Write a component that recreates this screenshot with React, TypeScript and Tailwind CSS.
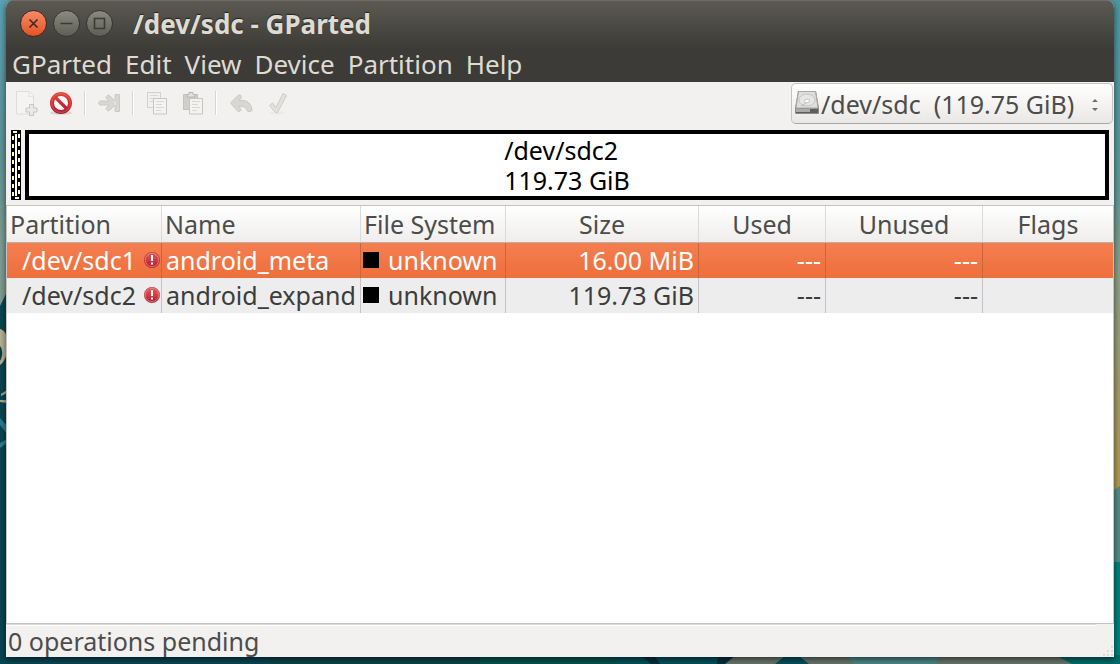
import { useState } from 'react';
import type { ReactNode } from 'react';

interface Partition {
  path: string;
  name: string;
  fileSystem: string;
  size: string;
  used: string;
  unused: string;
  flags: string;
}

const partitions: Partition[] = [
  { path: '/dev/sdc1', name: 'android_meta', fileSystem: 'unknown', size: '16.00 MiB', used: '---', unused: '---', flags: '' },
  { path: '/dev/sdc2', name: 'android_expand', fileSystem: 'unknown', size: '119.73 GiB', used: '---', unused: '---', flags: '' },
];

const menus = ['GParted', 'Edit', 'View', 'Device', 'Partition', 'Help'];

const columns = [
  { label: 'Partition', width: 'w-[155px]', align: 'text-left' },
  { label: 'Name', width: 'w-[199px]', align: 'text-left' },
  { label: 'File System', width: 'w-[145px]', align: 'text-left' },
  { label: 'Size', width: 'w-[193px]', align: 'text-center' },
  { label: 'Used', width: 'w-[127px]', align: 'text-center' },
  { label: 'Unused', width: 'w-[157px]', align: 'text-center' },
  { label: 'Flags', width: '', align: 'text-center' },
];

// Desktop wallpaper, only visible around the window edges
function Wallpaper() {
  return (
    <svg className="absolute inset-0 h-full w-full" viewBox="0 0 1120 664" preserveAspectRatio="none" aria-hidden="true">
      <defs>
        <linearGradient id="wallLeft" x1="0" y1="0" x2="0" y2="1">
          <stop offset="0" stopColor="#5aa0b4" />
          <stop offset="0.5" stopColor="#5f9296" />
          <stop offset="0.8" stopColor="#7d9c92" />
          <stop offset="1" stopColor="#829a90" />
        </linearGradient>
        <linearGradient id="wallRight" x1="0" y1="0" x2="0" y2="1">
          <stop offset="0" stopColor="#4c98a4" />
          <stop offset="0.38" stopColor="#5f9a98" />
          <stop offset="0.55" stopColor="#8d9f88" />
          <stop offset="0.8" stopColor="#a39b68" />
          <stop offset="1" stopColor="#b29a4e" />
        </linearGradient>
      </defs>
      <rect width="1120" height="664" fill="#0a4552" />
      <rect width="20" height="310" fill="url(#wallLeft)" />
      <path d="M0 306l6-12v20H0z" fill="#0b4453" />
      <path d="M0 329c4 1 6 4 7 9v16c-2 5-4 9-7 11z" fill="#b3b293" />
      <path d="M0 346c3 4 3 10 0 15z" fill="#0a3c49" />
      <path d="M1 394l6-4v3l-6 3zM0 400h7v3l-7-1z" fill="#a9ab8f" />
      <path d="M0 418l7 8v8l-7-9zM0 443l7-4v4l-7 5z" fill="#2b7d8c" />
      <rect x="1100" width="20" height="500" fill="url(#wallRight)" />
      <path d="M1100 500l20-14v80h-20z" fill="#558a86" />
      <rect x="1100" y="562" width="20" height="102" fill="#00807c" />
      <path d="M270 655h380v9H270z" fill="#0b4348" />
      <path d="M480 655h140v9H480z" fill="#04504d" />
      <path d="M618 655h118v9H618z" fill="#02505a" />
      <path d="M640 655h14l6 9h-9zM718 655h18l-9 9h-10z" fill="#072f39" />
      <path d="M736 655h340l6 9H725z" fill="#65756a" />
      <path d="M775 664l10-8h14l10 8z" fill="#044f5a" />
      <path d="M845 655h96l-6 9h-80z" fill="#4b8585" />
      <path d="M1055 655h65v9h-48z" fill="#026a67" />
    </svg>
  );
}

function WindowButton({ label, close, children }: { label: string; close?: boolean; children: ReactNode }) {
  return (
    <button
      type="button"
      aria-label={label}
      className={
        close
          ? 'size-[27px] rounded-full border border-[#3a2a22] bg-linear-to-b from-[#f58a66] to-[#e4521f]'
          : 'size-[27px] rounded-full border border-[#35342f] bg-linear-to-b from-[#8b8a80] to-[#5f5e56]'
      }
    >
      <svg viewBox="0 0 25 25" className="size-[25px]" fill="none" stroke={close ? '#3c2a22' : '#3b3a35'} strokeWidth="1.6">
        {children}
      </svg>
    </button>
  );
}

function ToolButton({ label, disabled, children }: { label: string; disabled?: boolean; children: ReactNode }) {
  return (
    <button type="button" aria-label={label} title={label} disabled={disabled} className="size-6 shrink-0">
      <svg viewBox="0 0 24 24" className="size-6 overflow-visible" fill="none">
        {children}
      </svg>
    </button>
  );
}

function Separator() {
  return <div className="h-6 w-[2px] shrink-0 border-r border-l border-r-white border-l-[#d8d6d3]" />;
}

function WarningIcon() {
  return (
    <svg viewBox="0 0 16 16" className="size-4 shrink-0" role="img" aria-label="Warning">
      <defs>
        <linearGradient id="warnFill" x1="0" y1="0" x2="0" y2="1">
          <stop offset="0" stopColor="#e0615c" />
          <stop offset="0.5" stopColor="#cf3c3f" />
          <stop offset="1" stopColor="#aa2036" />
        </linearGradient>
      </defs>
      <circle cx="8" cy="8" r="7.700" fill="url(#warnFill)" stroke="#b5303f" strokeWidth="0.600" />
      <circle cx="8" cy="8" r="6.700" fill="none" stroke="#ee9a96" strokeWidth="0.600" />
      <path d="M7 3h2v6H7zM7 10.500h2v2H7z" fill="#fff" />
    </svg>
  );
}

// Narrow block of the selected partition, with its dashed selection frame
function SelectedStrip() {
  const dashes = [0, 1, 2, 3, 4, 5, 6, 7];
  return (
    <svg width="10" height="70" viewBox="0 0 10 70" shapeRendering="crispEdges" aria-hidden="true">
      <rect width="10" height="70" fill="#000" />
      <rect x="4" y="4" width="2" height="62" fill="#fff" />
      <rect x="2" y="1" width="4" height="2" fill="#ffffc0" />
      <rect x="4" y="67" width="4" height="2" fill="#ffffc0" />
      {dashes.map((i) => (
        <g key={i} fill="#ffffc0">
          <rect x="1" y={6 + i * 8} width="2" height="4" />
          <rect x="7" y={4 + i * 8} width="2" height="4" />
        </g>
      ))}
    </svg>
  );
}

function Toolbar() {
  const [device, setDevice] = useState('/dev/sdc');

  return (
    <div className="flex h-[43px] items-center justify-between pr-[1px] pl-2">
      <div className="flex items-center gap-[11px] pb-[2px]">
        <ToolButton label="New" disabled>
          <path d="M2.500 .5h12.500l4.500 4.500v18h-17z" fill="#f5f4f3" stroke="#dfdddb" />
          <path d="M14.500 .5c1 2 1 3.500 0 5 2-.6 3.500-.4 5 .5" fill="#fff" stroke="#dfdddb" />
          <path d="M15.500 13.500h4V17H23v4h-3.500v3.500h-4V21H12v-4h3.500z" fill="#eae9e6" stroke="#c6c5c2" />
        </ToolButton>
        <ToolButton label="Delete">
          <defs>
            <linearGradient id="banStroke" gradientUnits="userSpaceOnUse" x1="0" y1="1" x2="0" y2="23">
              <stop offset="0" stopColor="#e24a38" />
              <stop offset="0.5" stopColor="#cf2a30" />
              <stop offset="1" stopColor="#a81a34" />
            </linearGradient>
          </defs>
          <ellipse cx="12" cy="22" rx="11" ry="1.800" fill="#d8d6d3" />
          <circle cx="12" cy="12" r="8.800" fill="#fafafa" />
          <circle cx="12" cy="12" r="9" stroke="url(#banStroke)" strokeWidth="4" />
          <path d="M6 6l12 12" stroke="url(#banStroke)" strokeWidth="3.200" />
          <circle cx="12" cy="12" r="9.400" stroke="#ee8578" strokeWidth="0.700" opacity="0.7" />
        </ToolButton>
        <Separator />
        <ToolButton label="Resize/Move" disabled>
          <path d="M3 10h9L9.500 7.500C8.500 5.500 10.500 3.500 12.500 4.500L18 10V3.500h4.500v17H18V14l-5.500 5.500c-2 1-4-1-3-3L12 14H3c-1.800-1-1.800-3 0-4z" fill="#d8d7d4" stroke="#cbcac7" strokeLinejoin="round" />
          <path d="M18 10v4" stroke="#efeeed" />
        </ToolButton>
        <Separator />
        <ToolButton label="Copy" disabled>
          <path d="M2.500 1.500h13v15h-13z" fill="#f1f0ef" stroke="#d2d1ce" />
          <path d="M5 4.500h8M5 7.500h6M5 10.500h3" stroke="#d8d7d4" />
          <path d="M8.500 7.500h13v15.500h-13z" fill="#f4f3f2" stroke="#c6c5c2" />
          <path d="M11 10.500h8M11 13.500h6M11 16.500h8M11 19.500h5" stroke="#d8d7d4" />
        </ToolButton>
        <ToolButton label="Paste" disabled>
          <path d="M3.500 3.500h14v15h-14z" fill="#d0cfcc" stroke="#c3c2bf" />
          <path d="M7 6V3.500h2V1.500h4v2h2V6z" fill="#e2e1de" stroke="#b6b5b2" />
          <path d="M9.500 7.500h13v15.500h-13z" fill="#f4f3f2" stroke="#c6c5c2" />
          <path d="M12 10.500h8M12 13.500h6M12 16.500h8M12 19.500h5" stroke="#d8d7d4" />
        </ToolButton>
        <Separator />
        <ToolButton label="Undo" disabled>
          <path d="M2.500 12L10 4.500c2-1.500 4 .5 3 2.500l-2 2.500c8-1 12.500 3 13 10-1.500 1.500-4 1.500-5 0-.5-3-3.500-4.500-8-4l1.500 2c1 2-1 4-3 2.500z" fill="#d8d7d4" stroke="#c9c8c5" strokeLinejoin="round" />
        </ToolButton>
        <ToolButton label="Apply" disabled>
          <ellipse cx="14" cy="22" rx="8" ry="1.500" fill="#eae9e7" />
          <path d="M6.500 14.500l3-2.500 3.500 4.500L20 2.500l3.500 2L14.500 21.500h-2z" fill="#e2e1de" stroke="#cccbc8" strokeLinejoin="round" />
        </ToolButton>
      </div>

      <div className="relative">
        <select
          aria-label="Device"
          value={device}
          onChange={(e) => setDevice(e.target.value)}
          className="block h-[41px] w-[322px] appearance-none rounded-[5px] border border-[#c6c4c0] border-b-[#a9a7a2] bg-linear-to-b from-white to-[#eae8e6] pl-[29px] text-[25px] text-[#4c4c4c]"
        >
          <option value="/dev/sdc">{'/dev/sdc\u00a0\u00a0(119.75 GiB)'}</option>
        </select>
        <svg viewBox="0 0 24 24" className="pointer-events-none absolute top-[7px] left-1 size-6" aria-hidden="true">
          <path d="M3 1h18l3 17v4.500c0 1-.5 1.500-1.500 1.500h-21C.5 24 0 23.500 0 22.500V18z" fill="#8a8a88" />
          <path d="M3.500 1.500h17L23 18H1z" fill="#dededc" stroke="#a9a9a6" />
          <path d="M1 19h22v4H1z" fill="#5e5e5c" />
          <path d="M1 19h14v3H1z" fill="#aaaaa8" />
          <ellipse cx="12" cy="10" rx="8" ry="6" fill="#e6e6e4" stroke="#c6c6c3" />
          <ellipse cx="12" cy="11" rx="2.500" ry="1.800" fill="#fff" stroke="#c6c6c3" />
          <path d="M6 16c1-1 3-1.500 5-3" stroke="#b8b8b5" fill="none" />
        </svg>
        <svg viewBox="0 0 8 14" className="pointer-events-none absolute top-[15px] right-[14px] h-[14px] w-2" fill="#6e6d69" aria-hidden="true">
          <path d="M1 4l3-3 3 3zM1 10l3 3 3-3z" />
        </svg>
      </div>
    </div>
  );
}

function PartitionTable() {
  const [selected, setSelected] = useState('/dev/sdc1');

  return (
    <table className="w-full table-fixed border-separate border-spacing-0">
      <thead>
        <tr className="h-[37px] bg-linear-to-b from-white to-[#efedeb]">
          {columns.map((col) => (
            <th
              key={col.label}
              scope="col"
              className={`${col.width} ${col.align} border-r border-b border-r-[#dcdad7] border-b-[#b3b1ac] px-[3px] font-normal whitespace-nowrap text-[#4c4c4c] last:border-r-0`}
            >
              {col.label}
            </th>
          ))}
        </tr>
      </thead>
      <tbody>
        {partitions.map((p) => {
          const active = p.path === selected;
          const cell = active
            ? 'border-r border-[#c96540] pb-[2px] last:border-r-0'
            : 'border-r border-[#c4c4c4] pb-[2px] last:border-r-0';
          return (
            <tr
              key={p.path}
              aria-selected={active}
              onClick={() => setSelected(p.path)}
              className={active ? 'h-[35px] bg-linear-to-b from-[#f57e4f] to-[#ed6f3c] text-white' : 'h-[35px] bg-[#ededed] text-[#3c3c3c]'}
            >
              <td className={cell}>
                <div className="flex items-center justify-between pr-[1px] pl-[15px]">
                  {p.path}
                  <WarningIcon />
                </div>
              </td>
              <td className={`${cell} pl-1 whitespace-nowrap`}>{p.name}</td>
              <td className={cell}>
                <div className="flex items-center gap-[9px] pl-[2px]">
                  <span className="size-4 bg-black" />
                  {p.fileSystem}
                </div>
              </td>
              <td className={`${cell} pr-1 text-right`}>{p.size}</td>
              <td className={`${cell} pr-1 text-right`}>{p.used}</td>
              <td className={`${cell} pr-1 text-right`}>{p.unused}</td>
              <td className={cell}>{p.flags}</td>
            </tr>
          );
        })}
      </tbody>
    </table>
  );
}

export default function App() {
  return (
    <div className="relative flex min-h-screen flex-col px-[6px] pb-[7px] font-['Noto_Sans',sans-serif] text-[25px] leading-[30px]">
      <Wallpaper />

      <div className="relative flex flex-1 flex-col overflow-hidden rounded-t-lg bg-[#f2f1f0] shadow-[0_2px_6px_rgba(0,0,0,0.6)]">
        {/* Title bar */}
        <header className="bg-linear-to-b from-[#5c5a52] to-[#3c3b37] to-60% text-[26px] text-[#dfdbd2]">
          <div className="flex h-12 items-center gap-[6px] border-t border-[#6d6b62] pb-[2px] pl-[14px]">
            <WindowButton label="Close" close>
              <path d="M8.500 8.500l8 8M16.500 8.500l-8 8" />
            </WindowButton>
            <WindowButton label="Minimize">
              <path d="M6.500 12.500h12" />
            </WindowButton>
            <WindowButton label="Maximize">
              <path d="M7.500 7.500h10v10h-10z" />
            </WindowButton>
            <h1 className="ml-[14px] font-bold [text-shadow:0_-1px_1px_#222]">/dev/sdc - GParted</h1>
          </div>
          <nav className="flex h-[34px] items-center gap-[13px] pb-[2px] pl-[6px]">
            {menus.map((menu) => (
              <button key={menu} type="button">
                {menu}
              </button>
            ))}
          </nav>
        </header>

        <Toolbar />

        {/* Disk map */}
        <div className="flex gap-1 px-[5px] pt-[5px] pb-[5px] text-black">
          <SelectedStrip />
          <div className="flex h-[70px] flex-1 items-center justify-center border-4 border-black bg-white">
            <p>
              /dev/sdc2
              <br />
              119.73 GiB
            </p>
          </div>
        </div>

        {/* Partition list */}
        <main className="flex-1 border border-[#c6c4c0] bg-white">
          <PartitionTable />
        </main>

        <footer className="h-[33px] text-[#4c4c4c]">
          <div className="mr-[18px] h-[2px] border-t border-b border-t-[#dddbd8] border-b-white" />
          <div className="flex h-[31px] justify-between pl-[2px]">
            <span>0 operations pending</span>
            <svg width="12" height="12" viewBox="0 0 12 12" className="self-end" fill="#dfddda" aria-hidden="true">
              <path d="M9 1h2v2H9zM9 5h2v2H9zM5 5h2v2H5zM9 9h2v2H9zM5 9h2v2H5zM1 9h2v2H1z" />
            </svg>
          </div>
        </footer>
      </div>
    </div>
  );
}
